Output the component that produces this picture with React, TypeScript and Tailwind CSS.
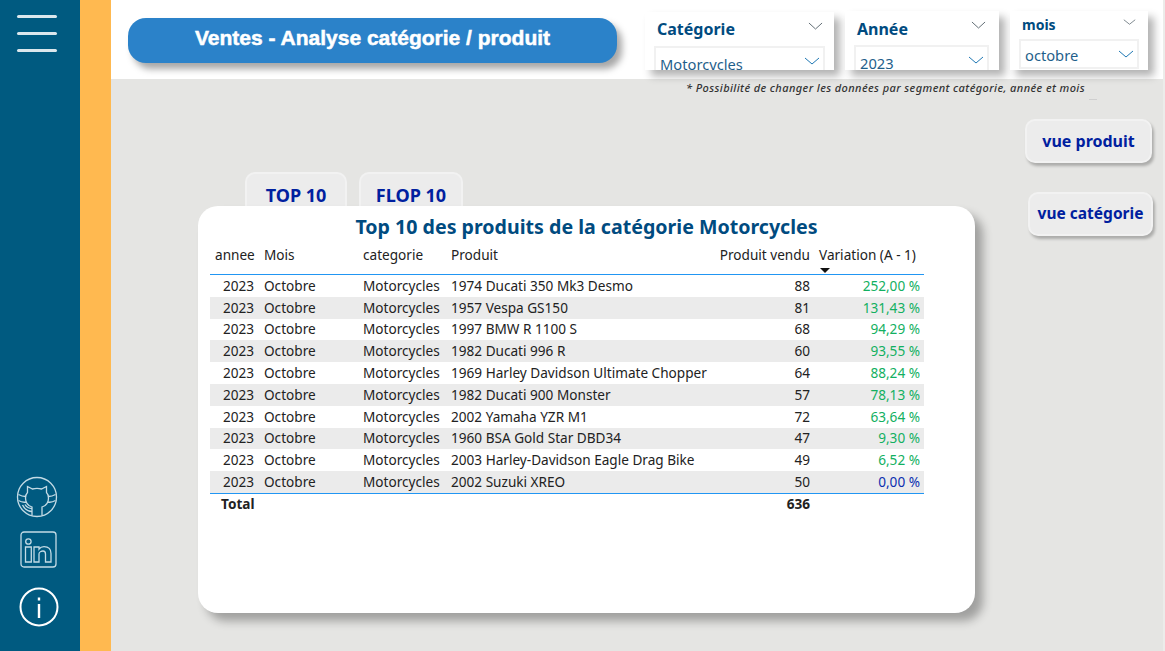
const rows = [
  ['1974 Ducati 350 Mk3 Desmo', '88', '252,00 %'],
  ['1957 Vespa GS150', '81', '131,43 %'],
  ['1997 BMW R 1100 S', '68', '94,29 %'],
  ['1982 Ducati 996 R', '60', '93,55 %'],
  ['1969 Harley Davidson Ultimate Chopper', '64', '88,24 %'],
  ['1982 Ducati 900 Monster', '57', '78,13 %'],
  ['2002 Yamaha YZR M1', '72', '63,64 %'],
  ['1960 BSA Gold Star DBD34', '47', '9,30 %'],
  ['2003 Harley-Davidson Eagle Drag Bike', '49', '6,52 %'],
  ['2002 Suzuki XREO', '50', '0,00 %'],
];

const cols = 'grid w-[714px] grid-cols-[49px_99px_88px_268px_101px_109px]';

function Chevron({ className }: { className: string }) {
  return (
    <svg viewBox="0 0 16 8" fill="none" stroke="currentColor" strokeWidth="1" preserveAspectRatio="none" className={className}>
      <path d="M1 1l7 6 7-6" />
    </svg>
  );
}

interface SlicerProps {
  label: string;
  value: string;
  className: string;
  labelClass: string;
  topChevron: string;
  boxClass: string;
}

function Slicer({ label, value, className, labelClass, topChevron, boxClass }: SlicerProps) {
  return (
    <div className={`relative overflow-hidden bg-white shadow-[6px_6px_8px_rgba(0,0,0,0.3)] ${className}`}>
      <span className={`absolute font-bold text-[#004b80] ${labelClass}`}>{label}</span>
      <Chevron className={`absolute text-[#5f6b73] ${topChevron}`} />
      <div className={`absolute flex items-center border-2 border-[#f1f1f1] pl-[4px] text-[14.7px] text-[#1f5f8b] ${boxClass}`}>
        {value}
        <Chevron className="absolute right-[3px] top-[9px] h-[8px] w-[16px] text-[#1f78b4]" />
      </div>
    </div>
  );
}

function GithubIcon() {
  return (
    <svg viewBox="0 0 42 42" fill="none" stroke="#c3dbe5" strokeWidth="1.3" className="h-[42px] w-[42px]">
      <circle cx="21" cy="21" r="19.5" />
      <path d="M16 39.5V31C11 29.5 9.5 26 9.5 22 9.5 19.5 10.5 17.5 11.5 16.5V10.5L16.5 13C19 12.3 23 12.3 25.5 13L30.5 10.5V16.5C31.5 17.5 32.5 19.5 32.5 22 32.5 26 31 29.5 26 31V39.5" />
      <path d="M2.5 18.5C5 20 8 20.5 9.7 20.5M2.5 24.5C5 26 8 26.5 10.3 26M39.5 18.5C37 20 34 20.5 32.3 20.5M39.5 24.5C37 26 34 26.5 31.7 26" />
      <path d="M6.5 29C8.5 33 11 35.5 16 35.5M9 28.5C10.5 31 13 32.5 16 32.5" />
    </svg>
  );
}

function LinkedinIcon() {
  return (
    <svg viewBox="0 0 37 37" fill="none" stroke="#c3dbe5" strokeWidth="1.3" className="h-[37px] w-[37px]">
      <rect x="1" y="1" width="35" height="35" rx="3" />
      <circle cx="8.4" cy="10.5" r="2.7" />
      <path d="M5.5 16h5.8v15H5.5zM14 16h5v2c1.2-1.6 3-2.4 5-2.4 4.5 0 7 2.5 7 7V31h-5.5v-8c0-2-1-3-2.5-3s-4 1-4 3v8H14z" />
    </svg>
  );
}

function InfoIcon() {
  return (
    <svg viewBox="0 0 40 40" fill="none" stroke="#ffffff" className="h-[40px] w-[40px]">
      <circle cx="20" cy="20" r="18.5" strokeWidth="2" />
      <path d="M20 17v14M20 10.5v3" strokeWidth="2.4" />
    </svg>
  );
}

export default function App() {
  return (
    <div className="flex h-[651px] w-[1165px] overflow-hidden bg-[#e5e5e3] font-['Noto_Sans','Open_Sans',sans-serif]">
      <aside className="flex w-[80px] flex-col items-start bg-[#005a80] pb-[24px] pl-[16px]">
        <div className="ml-px mt-[15px] flex w-[40px] flex-col gap-[14px]">
          <div className="h-[3px] w-[40px] rounded-full bg-[#dbe7ec]" />
          <div className="h-[3px] w-[40px] rounded-full bg-[#dbe7ec]" />
          <div className="h-[3px] w-[40px] rounded-full bg-[#dbe7ec]" />
        </div>
        <div className="mt-auto flex flex-col items-start">
          <GithubIcon />
          <div className="ml-[4px] mt-[13px]"><LinkedinIcon /></div>
          <div className="ml-[3px] mt-[19px]"><InfoIcon /></div>
        </div>
      </aside>
      <div className="w-[31px] bg-[#ffb950]" />

      <main className="flex min-w-0 flex-1 flex-col border-r-2 border-[#ececea]">
        <header className="relative z-10 flex h-[79px] bg-white pl-[17px]">
          <div className="mt-[18px] flex h-[45px] w-[489px] items-start justify-center rounded-[18px] bg-[#2b82c9] pt-[4px] font-['Liberation_Sans',sans-serif] text-[21px] font-bold text-white shadow-[5px_6px_7px_rgba(0,0,0,0.35)] [-webkit-text-stroke:0.5px_white]">
            Ventes - Analyse catégorie / produit
          </div>
          <div className="ml-[28px] mt-[12px]">
            <Slicer label="Catégorie" value="Motorcycles" className="h-[58px] w-[189px]" labelClass="left-[12px] top-[5px] text-[16px]" topChevron="right-[11px] top-[10px] h-[8px] w-[15px]" boxClass="left-[9px] top-[34px] h-[36px] w-[171px]" />
          </div>
          <div className="ml-[11px] mt-[11px]">
            <Slicer label="Année" value="2023" className="h-[59px] w-[154px]" labelClass="left-[12px] top-[6px] text-[16px]" topChevron="right-[13px] top-[10px] h-[8px] w-[15px]" boxClass="left-[9px] top-[34px] h-[36px] w-[135px]" />
          </div>
          <div className="ml-[11px] mt-[11px]">
            <Slicer label="mois" value="octobre" className="h-[59px] w-[138px]" labelClass="left-[12px] top-[3px] text-[14px]" topChevron="right-[12px] top-[8px] h-[6px] w-[13px]" boxClass="left-[9px] top-[28px] h-[30px] w-[120px] pt-[3px]" />
          </div>
        </header>

        <div className="relative mt-px">
          <p className="pr-[78px] text-right text-[11px] font-medium italic leading-[15px] tracking-[0.4px] text-[#333]">
            * Possibilité de changer les données par segment catégorie, année et mois
          </p>
          <span className="absolute right-[66px] top-[19px] h-px w-[8px] bg-[#cfcfcf]" />
        </div>

        <div className="flex flex-1 pl-[87px]">
          <section className="pt-[77px]">
            <div className="flex gap-[12px] pl-[47px]">
              <div className="flex h-[50px] w-[102px] items-start justify-center rounded-[10px] border-2 border-[#f2f2f2] bg-[#ececec] pt-[9px] text-[18px] font-bold leading-[24px] text-[#00209f]">TOP 10</div>
              <div className="flex h-[50px] w-[104px] items-start justify-center rounded-[10px] border-2 border-[#f2f2f2] bg-[#ececec] pt-[9px] text-[18px] font-bold leading-[24px] text-[#00209f]">FLOP 10</div>
            </div>
            <div className="relative z-[1] -mt-[16px] h-[407px] w-[777px] rounded-[20px] bg-white px-[12px] pt-[8px] shadow-[8px_8px_10px_rgba(0,0,0,0.3)]">
              <h1 className="text-center text-[19.6px] font-bold leading-[26px] text-[#004b80]">Top 10 des produits de la catégorie Motorcycles</h1>
              <div className={`${cols} relative mt-[4px] h-[31px] border-b border-[#2196f3] pt-px text-[13.6px] leading-[20px] text-[#222]`}>
                <div className="pl-[5px]">annee</div>
                <div className="pl-[5px]">Mois</div>
                <div className="pl-[5px]">categorie</div>
                <div className="pl-[5px]">Produit</div>
                <div className="whitespace-nowrap pr-[5px] text-right">Produit vendu</div>
                <div className="whitespace-nowrap pl-[4px]">Variation (A - 1)</div>
                <span className="absolute bottom-[1px] left-[610px] h-0 w-0 border-x-[5px] border-t-[5px] border-x-transparent border-t-[#111]" />
              </div>
              {rows.map((row, i) => (
                <div key={row[0]} className={`${cols} h-[21.8px] items-center text-[13.6px] leading-[20px] text-[#222] ${i % 2 ? 'bg-[#ebebeb]' : 'bg-white'}`}>
                  <div className="pr-[5px] text-right">2023</div>
                  <div className="pl-[5px]">Octobre</div>
                  <div className="pl-[5px]">Motorcycles</div>
                  <div className="whitespace-nowrap pl-[5px]">{row[0]}</div>
                  <div className="pr-[5px] text-right">{row[1]}</div>
                  <div className={`pr-[4px] text-right ${row[2] === '0,00 %' ? 'text-[#0a2fb0]' : 'text-[#12b061]'}`}>{row[2]}</div>
                </div>
              ))}
              <div className={`${cols} h-[21px] items-center border-t border-[#2196f3] text-[13.6px] font-bold text-[#222]`}>
                <div className="col-span-4 pl-[11px]">Total</div>
                <div className="pr-[5px] text-right">636</div>
              </div>
            </div>
          </section>

          <div className="flex flex-1 flex-col items-end pr-[11px] pt-[24px]">
            <div className="flex h-[44px] w-[127px] items-center justify-center rounded-[10px] border-2 border-[#f2f2f2] bg-[#ececec] text-[16px] font-bold text-[#00209f] shadow-[2px_3px_3px_rgba(0,0,0,0.25)]">vue produit</div>
            <div className="-mr-px mt-[29px] flex h-[44px] w-[125px] items-center justify-center rounded-[10px] border-2 border-[#f2f2f2] bg-[#ececec] text-[15.5px] font-bold text-[#00209f] shadow-[2px_3px_3px_rgba(0,0,0,0.25)]">vue catégorie</div>
          </div>
        </div>
      </main>
    </div>
  );
}
